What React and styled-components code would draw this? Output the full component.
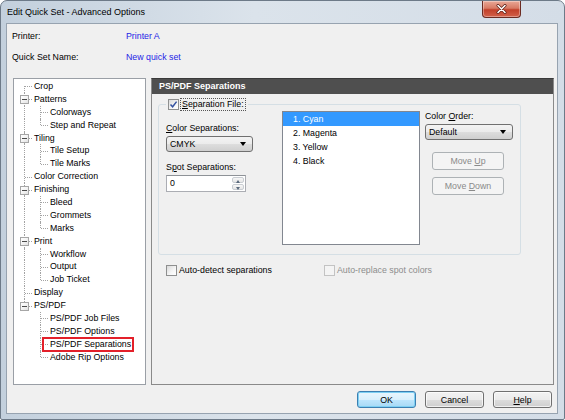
import React from 'react';
import styled, { createGlobalStyle, css } from 'styled-components';

const GlobalStyle = createGlobalStyle`
  html, body { margin: 0; padding: 0; background: #ffffff; }
  body {
    font-family: "Liberation Sans", Arial, sans-serif;
    font-size: 8.8px;
    color: #000;
  }
  * { box-sizing: border-box; }
`;

const Window = styled.div`
  width: 565px;
  height: 420px;
  display: flex;
  flex-direction: column;
  border: 1px solid #6d7a88;
  border-radius: 7px 7px 2px 2px;
  background: linear-gradient(90deg, #c3d0dd 0%, #dbe3eb 45%, #d4dde7 100%);
  padding: 0 6px 5px 5px;
`;

const TitleBar = styled.div`
  height: 22px;
  display: flex;
  justify-content: space-between;
  align-items: flex-start;
`;

const Title = styled.div`
  line-height: 22px;
  padding-left: 1px;
  font-size: 9px;
  color: #000;
`;

const CloseButton = styled.div`
  width: 39px;
  height: 17px;
  margin-right: 37px;
  border: 1px solid #6b2b22;
  border-top: none;
  border-radius: 0 0 4px 4px;
  background: linear-gradient(180deg, #e9a897 0%, #d77a64 45%, #c2402a 55%, #d2614a 100%);
  display: flex;
  align-items: center;
  justify-content: center;
  box-shadow: inset 0 0 0 1px rgba(255, 255, 255, 0.35);
`;

const Client = styled.div`
  flex: 1;
  display: flex;
  flex-direction: column;
  border: 1px solid #97a3b0;
  background: #f0f0f0;
  padding: 6px 3px 5px 5px;
  min-height: 0;
`;

const InfoGrid = styled.div`
  display: grid;
  grid-template-columns: 114px 1fr;
  row-gap: 8px;
  line-height: 13px;
`;

const InfoValue = styled.div`
  color: #2424e6;
`;

const Body = styled.div`
  flex: 1;
  display: flex;
  gap: 5px;
  margin-top: 14px;
  padding-left: 1px;
  min-height: 0;
`;

const Tree = styled.div`
  width: 133px;
  border: 1px solid #9a9fa6;
  background: #ffffff;
  padding: 1px 0 0 2px;
`;

const TreeRow = styled.div`
  height: 12.9px;
  display: flex;
  align-items: stretch;
  white-space: nowrap;
  line-height: 12.9px;
`;

const lineColor = '#a3a3a3';

const Gutter = styled.span`
  position: relative;
  width: 16px;
  flex-shrink: 0;

  &::before {
    content: '';
    position: absolute;
    left: 8px;
    border-left: 1px dotted ${lineColor};
    display: ${(p) => (p.$kind === 'blank' ? 'none' : 'block')};
    top: ${(p) => (p.$kind === 'first' ? '50%' : '0')};
    bottom: ${(p) => (p.$kind === 'elbow' ? '50%' : '0')};
  }

  &::after {
    content: '';
    position: absolute;
    left: 9px;
    right: 0;
    top: 50%;
    border-top: 1px dotted ${lineColor};
    display: ${(p) => (p.$kind === 'pipe' || p.$kind === 'blank' ? 'none' : 'block')};
  }
`;

const Expander = styled.span`
  position: absolute;
  left: 4px;
  top: calc(50% - 4px);
  width: 9px;
  height: 9px;
  border: 1px solid #a6a6a6;
  background: linear-gradient(135deg, #ffffff 0%, #f4f4f4 50%, #e2e2e2 100%);
  z-index: 1;

  &::before {
    content: '';
    position: absolute;
    left: 1px;
    right: 1px;
    top: 3px;
    height: 1px;
    background: #4a4a4a;
  }
`;

const TreeLabel = styled.span`
  position: relative;
  padding: 0 1px 0 2px;

  ${(p) =>
    p.$marked &&
    css`
      &::after {
        content: '';
        position: absolute;
        top: -1px;
        bottom: -1px;
        left: -6px;
        right: -2px;
        border: 2px solid #e3202a;
      }
    `}
`;

const Panel = styled.div`
  flex: 1;
  display: flex;
  flex-direction: column;
  border: 1px solid #8a8a8a;
  border-top-color: #3a3a3a;
`;

const PanelHeader = styled.div`
  height: 15px;
  line-height: 14px;
  background: #4f4f4f;
  color: #ffffff;
  font-weight: bold;
  font-size: 9px;
  padding-left: 7px;
`;

const Group = styled.fieldset`
  margin: 4px 0 0 6px;
  width: 363px;
  padding: 0 7px 9px 7px;
  border: 1px solid #d5dfe5;
  border-radius: 3px;
  min-width: 0;
`;

const Legend = styled.legend`
  padding: 0 2px 0 2px;
  display: flex;
  align-items: center;
  height: 13px;
`;

const FocusText = styled.span`
  border: 1px dotted #555;
  padding: 0 1px;
  line-height: 11px;
  margin-left: 1px;
`;

const GroupRow = styled.div`
  display: flex;
  align-items: flex-start;
`;

const LeftCol = styled.div`
  width: 110px;
  margin-top: 11px;
  display: flex;
  flex-direction: column;
  align-items: flex-start;
`;

const RightCol = styled.div`
  width: 88px;
  margin-left: 5px;
  margin-top: -1px;
  display: flex;
  flex-direction: column;
  align-items: flex-start;
`;

const FieldLabel = styled.div`
  line-height: 13px;
  margin-top: ${(p) => p.$gap || 0}px;
`;

const Combo = styled.div`
  position: relative;
  width: ${(p) => p.$width}px;
  height: 16px;
  margin-top: 1px;
  border: 1px solid #707070;
  border-radius: 3px;
  background: linear-gradient(180deg, #f3f3f3 0%, #ebebeb 50%, #dddddd 51%, #cfcfcf 100%);
  line-height: 14px;
  padding-left: 3px;

  &::after {
    content: '';
    position: absolute;
    right: 6px;
    top: 5px;
    border-left: 3.5px solid transparent;
    border-right: 3.5px solid transparent;
    border-top: 4px solid #000;
  }
`;

const Spinner = styled.div`
  width: 80px;
  height: 17px;
  margin-top: 1px;
  display: flex;
  border: 1px solid #abadb3;
  border-top-color: #8e9297;
  background: #ffffff;
  padding: 1px;
`;

const SpinText = styled.div`
  flex: 1;
  line-height: 13px;
  padding-left: 2px;
`;

const SpinButtons = styled.div`
  width: 12px;
  display: flex;
  flex-direction: column;
  gap: 1px;
`;

const SpinButton = styled.div`
  flex: 1;
  position: relative;
  border: 1px solid #c9cdd2;
  border-radius: 2px;
  background: linear-gradient(180deg, #f7f7f7, #e6e6e6);

  &::after {
    content: '';
    position: absolute;
    left: 2.5px;
    top: 1.5px;
    border-left: 2.5px solid transparent;
    border-right: 2.5px solid transparent;
    ${(p) =>
      p.$up
        ? css`border-bottom: 3px solid #5a6a7c;`
        : css`border-top: 3px solid #5a6a7c;`}
  }
`;

const ListBox = styled.div`
  width: 138px;
  height: 134px;
  margin-left: 6px;
  border: 1px solid #828790;
  background: #ffffff;
`;

const ListItem = styled.div`
  height: 14px;
  line-height: 14px;
  padding-left: 10px;
  background: ${(p) => (p.$selected ? '#3399ff' : 'transparent')};
  color: ${(p) => (p.$selected ? '#ffffff' : '#000')};
`;

const Button = styled.div`
  width: ${(p) => p.$width}px;
  height: ${(p) => p.$height || 17}px;
  margin-left: ${(p) => p.$indent || 0}px;
  margin-top: ${(p) => p.$gap || 0}px;
  border-radius: 3px;
  display: flex;
  align-items: center;
  justify-content: center;
  border: 1px solid #707070;
  background: linear-gradient(180deg, #f2f2f2 0%, #ebebeb 50%, #dddddd 51%, #cfcfcf 100%);
  box-shadow: inset 0 0 0 1px rgba(255, 255, 255, 0.7);

  ${(p) =>
    p.$disabled &&
    css`
      border-color: #adb2b5;
      background: #f4f4f4;
      color: #8a8a8a;
      box-shadow: none;
    `}

  ${(p) =>
    p.$default &&
    css`
      border-color: #3c7fb1;
      background: linear-gradient(180deg, #eaf6fd 0%, #d9f0fc 50%, #bee6fd 51%, #a7d9f5 100%);
      box-shadow: inset 0 0 0 1px #7ed0f3;
    `}
`;

const CheckRow = styled.div`
  display: flex;
  margin-top: 9px;
  padding-left: 14px;
  line-height: 13px;
`;

const CheckItem = styled.div`
  width: ${(p) => (p.$width ? `${p.$width}px` : 'auto')};
  display: flex;
  align-items: center;
  gap: 2px;
  color: ${(p) => (p.$disabled ? '#8d8d8d' : '#000')};
`;

const Box = styled.span`
  width: 11px;
  height: 11px;
  flex-shrink: 0;
  display: flex;
  align-items: center;
  justify-content: center;
  border: 1px solid ${(p) => (p.$disabled ? '#c3c3c3' : '#8e8f8f')};
  background: ${(p) =>
    p.$disabled ? '#f4f4f4' : 'linear-gradient(135deg, #d9d9d9 0%, #f6f6f6 60%, #ffffff 100%)'};
`;

const Footer = styled.div`
  display: flex;
  justify-content: flex-end;
  gap: 9px;
  margin-top: 6px;
  padding-right: 2px;
`;

function CheckBox({ checked, disabled }) {
  return (
    <Box $disabled={disabled}>
      {checked && (
        <svg width="9" height="9" viewBox="0 0 9 9">
          <path d="M1.5 4.6 L3.6 6.8 L7.6 1.6" fill="none" stroke="#3552a0" strokeWidth="1.5" />
        </svg>
      )}
    </Box>
  );
}

const treeRows = [
  { text: 'Crop', g: ['first'] },
  { text: 'Patterns', g: ['tee'], open: true },
  { text: 'Colorways', g: ['pipe', 'tee'] },
  { text: 'Step and Repeat', g: ['pipe', 'elbow'] },
  { text: 'Tiling', g: ['tee'], open: true },
  { text: 'Tile Setup', g: ['pipe', 'tee'] },
  { text: 'Tile Marks', g: ['pipe', 'elbow'] },
  { text: 'Color Correction', g: ['tee'] },
  { text: 'Finishing', g: ['tee'], open: true },
  { text: 'Bleed', g: ['pipe', 'tee'] },
  { text: 'Grommets', g: ['pipe', 'tee'] },
  { text: 'Marks', g: ['pipe', 'elbow'] },
  { text: 'Print', g: ['tee'], open: true },
  { text: 'Workflow', g: ['pipe', 'tee'] },
  { text: 'Output', g: ['pipe', 'tee'] },
  { text: 'Job Ticket', g: ['pipe', 'elbow'] },
  { text: 'Display', g: ['tee'] },
  { text: 'PS/PDF', g: ['elbow'], open: true },
  { text: 'PS/PDF Job Files', g: ['blank', 'tee'] },
  { text: 'PS/PDF Options', g: ['blank', 'tee'] },
  { text: 'PS/PDF Separations', g: ['blank', 'tee'], marked: true },
  { text: 'Adobe Rip Options', g: ['blank', 'elbow'] },
];

const colors = ['1. Cyan', '2. Magenta', '3. Yellow', '4. Black'];

export default function App() {
  return (
    <>
      <GlobalStyle />
      <Window>
        <TitleBar>
          <Title>Edit Quick Set - Advanced Options</Title>
          <CloseButton>
            <svg width="11" height="10" viewBox="0 0 11 10">
              <path d="M2 1.5 L9 8.5 M9 1.5 L2 8.5" stroke="#5a1e16" strokeWidth="3" strokeLinecap="round" />
              <path d="M2 1.5 L9 8.5 M9 1.5 L2 8.5" stroke="#ffffff" strokeWidth="1.6" strokeLinecap="round" />
            </svg>
          </CloseButton>
        </TitleBar>
        <Client>
          <InfoGrid>
            <div>Printer:</div>
            <InfoValue>Printer A</InfoValue>
            <div>Quick Set Name:</div>
            <InfoValue>New quick set</InfoValue>
          </InfoGrid>

          <Body>
            <Tree>
              {treeRows.map((row) => (
                <TreeRow key={row.text}>
                  {row.g.map((kind, i) => (
                    <Gutter key={i} $kind={kind}>
                      {row.open && i === row.g.length - 1 && <Expander />}
                    </Gutter>
                  ))}
                  <TreeLabel $marked={row.marked}>{row.text}</TreeLabel>
                </TreeRow>
              ))}
            </Tree>

            <Panel>
              <PanelHeader>PS/PDF Separations</PanelHeader>
              <Group>
                <Legend>
                  <CheckBox checked />
                  <FocusText>
                    <u>S</u>eparation File:
                  </FocusText>
                </Legend>
                <GroupRow>
                  <LeftCol>
                    <FieldLabel>
                      <u>C</u>olor Separations:
                    </FieldLabel>
                    <Combo $width={87}>CMYK</Combo>
                    <FieldLabel $gap={9}>
                      S<u>p</u>ot Separations:
                    </FieldLabel>
                    <Spinner>
                      <SpinText>0</SpinText>
                      <SpinButtons>
                        <SpinButton $up />
                        <SpinButton />
                      </SpinButtons>
                    </Spinner>
                  </LeftCol>

                  <ListBox>
                    {colors.map((c, i) => (
                      <ListItem key={c} $selected={i === 0}>
                        {c}
                      </ListItem>
                    ))}
                  </ListBox>

                  <RightCol>
                    <FieldLabel>
                      Color <u>O</u>rder:
                    </FieldLabel>
                    <Combo $width={88}>Default</Combo>
                    <Button $width={72} $height={18} $indent={7} $gap={12} $disabled>
                      Move&nbsp;<u>U</u>p
                    </Button>
                    <Button $width={72} $height={18} $indent={7} $gap={7} $disabled>
                      Move&nbsp;<u>D</u>own
                    </Button>
                  </RightCol>
                </GroupRow>
              </Group>

              <CheckRow>
                <CheckItem $width={158}>
                  <CheckBox />
                  <span>Auto-detect separations</span>
                </CheckItem>
                <CheckItem $disabled>
                  <CheckBox disabled />
                  <span>Auto-replace spot colors</span>
                </CheckItem>
              </CheckRow>
            </Panel>
          </Body>

          <Footer>
            <Button $width={59} $default>OK</Button>
            <Button $width={59}>Cancel</Button>
            <Button $width={59}>
              <u>H</u>elp
            </Button>
          </Footer>
        </Client>
      </Window>
    </>
  );
}
